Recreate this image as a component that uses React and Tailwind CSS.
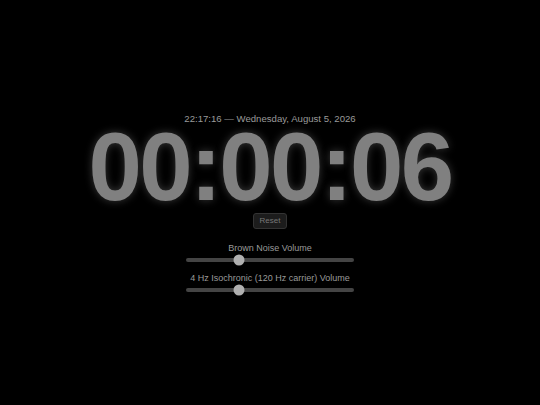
import React from "react";

function Slider({ label, value }) {
  return (
    <div className="flex flex-col items-center">
      <div className="text-[9px] leading-[11px] text-[#9a9a9a]">{label}</div>
      <div className="relative mt-[4px] h-[4px] w-[168px] rounded-full bg-[#444444]">
        <div
          className="absolute top-1/2 h-[11px] w-[11px] -translate-x-1/2 -translate-y-1/2 rounded-full bg-[#b0b0b0]"
          style={{ left: `${5.5 + value * 157}px` }}
        />
      </div>
    </div>
  );
}

export default function App() {
  return (
    <div
      className="flex h-screen w-full flex-col items-center justify-center bg-black"
      style={{ fontFamily: '"Liberation Sans", Arial, sans-serif' }}
    >
      <div className="text-[9.6px] leading-[12px] text-[#9a9a9a]">
        22:17:16 — Wednesday, August 5, 2026
      </div>
      <div className="mt-[4px] text-8xl font-bold leading-[76px] tracking-[-0.028em] text-[#808080] [text-shadow:0_0_8px_rgba(160,160,160,0.35)]">
        00:00:06
      </div>
      <button className="mt-[8px] h-[16px] rounded-[3px] border border-[#333333] bg-[#1c1c1c] px-[6px] text-[8px] leading-[14px] text-[#777777]">
        Reset
      </button>
      <div className="mt-[14px] flex flex-col items-center gap-[11px]">
        <Slider label="Brown Noise Volume" value={0.3} />
        <Slider label="4 Hz Isochronic (120 Hz carrier) Volume" value={0.3} />
      </div>
    </div>
  );
}
